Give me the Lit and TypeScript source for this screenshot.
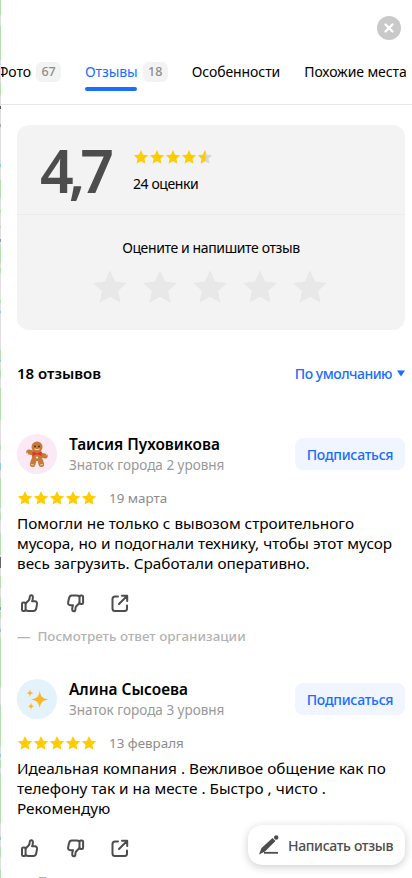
import { LitElement, css, html, svg } from 'lit'
import { customElement } from 'lit/decorators.js'

const STAR = 'M12 1.6l3.2 6.9 7.5.9-5.6 5.1 1.500 7.4L12 18.2l-6.600 3.700 1.500-7.400L1.300 9.400l7.500-.9z'

const star = (size: number, fill: string) => html`
  <svg width=${size} height=${size} viewBox="0 0 24 24"><path d=${STAR} fill=${fill} /></svg>
`

const halfStar = (size: number) => html`
  <svg width=${size} height=${size} viewBox="0 0 24 24">
    <defs>
      <clipPath id="part"><rect x="0" y="0" width="12.5" height="24" /></clipPath>
    </defs>
    <path d=${STAR} fill="#d6d6d6" />
    <path d=${STAR} fill="#fc0" clip-path="url(#part)" />
  </svg>
`

const thumbUp = html`
  <svg width="20" height="20" viewBox="0 0 20 20" fill="none" stroke="#4d4d4d" stroke-width="2" stroke-linejoin="round" stroke-linecap="round">
    <rect x="2" y="9.5" width="3.6" height="8.5" rx="1.3" />
    <path d="M5.600 10.500l3.200-3.200c.7-.9.900-1.700.9-3 0-1.300.6-2.100 1.500-2.100 1 0 1.700 1 1.700 2.200 0 1.200-.3 2.500-.8 3.900h2.800c1.500 0 2.300 1.100 2.100 2.600l-.7 4.200c-.3 1.800-1.300 2.900-3 2.900H8.500c-1.300 0-2.200-.4-2.900-1" />
  </svg>
`

const thumbDown = html`
  <svg width="20" height="20" viewBox="0 0 20 20" fill="none" stroke="#4d4d4d" stroke-width="2" stroke-linejoin="round" stroke-linecap="round">
    <rect x="14.500" y="2.500" width="3.600" height="8.500" rx="1.300" />
    <path d="M14.500 10l-3.200 3.200c-.7.9-.9 1.700-.9 3 0 1.300-.6 2.100-1.500 2.100-1 0-1.700-1-1.700-2.200 0-1.200.3-2.500.8-3.900H5.200c-1.500 0-2.300-1.100-2.100-2.600l.7-3.600c.3-1.800 1.300-3.500 3-3.500h4.800c1.300 0 2.200.4 2.900 1" />
  </svg>
`

const share = html`
  <svg width="20" height="20" viewBox="0 0 20 20" fill="none" stroke="#4d4d4d" stroke-width="2" stroke-linecap="round" stroke-linejoin="round">
    <path d="M8 3.500H5A2.500 2.500 0 0 0 2.500 6v9.500A2.500 2.500 0 0 0 5 18h9.500a2.500 2.500 0 0 0 2.500-2.500V12.500" />
    <path d="M9 11l8-8M12 2.800h5.200V8" />
  </svg>
`

const gingerbread = html`
  <svg width="24" height="27" viewBox="0 0 24 27">
    <g fill="#c67a38">
      <circle cx="12" cy="6" r="5.500" />
      <rect x="1" y="10.500" width="22" height="5" rx="2.500" transform="rotate(14 12 13)" />
      <rect x="7" y="10" width="10" height="10" rx="2" />
      <rect x="5.500" y="17" width="5.500" height="9" rx="2.700" transform="rotate(14 8 21)" />
      <rect x="13" y="17" width="5.500" height="9" rx="2.700" transform="rotate(-14 16 21)" />
    </g>
    <circle cx="10" cy="5.500" r=".9" fill="#4a2a12" />
    <circle cx="14" cy="5.500" r=".9" fill="#4a2a12" />
    <path d="M9.500 8q2.500 1.500 5 0" stroke="#fff" fill="none" stroke-width=".8" />
    <path d="M7.500 10.500l4.500 1.800 4.500-1.800v4.400L12 13.300l-4.500 1.600z" fill="#e5322d" />
    <circle cx="12" cy="16.500" r=".9" fill="#fff" />
    <path d="M2.500 11.500v3M21.500 11.500v3M6 23.500l3 .5M18 23.500l-3 .5" stroke="#f3dcc4" stroke-width=".8" />
  </svg>
`

const sparkles = html`
  <svg width="26" height="26" viewBox="0 0 24 24" fill="#fbb726">
    <path d="M14.500 4.500c.9 5.200 2.600 6.900 8 7.900-5.400 1-7.100 2.700-8 7.900-.9-5.200-2.600-6.900-8-7.900 5.400-1 7.100-2.700 8-7.900z" />
    <path d="M5.500 3c.4 2.400 1.100 3.100 3.500 3.500-2.400.4-3.100 1.100-3.500 3.500-.4-2.400-1.100-3.100-3.500-3.500 2.400-.4 3.100-1.100 3.500-3.500z" />
    <path d="M6.500 15.500c.4 2.200 1 2.800 3 3.200-2 .4-2.600 1-3 3.300-.4-2.300-1-2.900-3-3.300 2-.4 2.600-1 3-3.200z" />
  </svg>
`

const pen = svg`
  <path d="M1 20.500L3.500 14 14.500 4 17.500 7 7 17.500z" fill="#4d4d4d" />
  <circle cx="18.200" cy="3.500" r="2.200" fill="#4d4d4d" />
  <path d="M6 18.800h14" stroke="#4d4d4d" stroke-width="1.800" />
`

// the map behind the panel shows through along the left edge: [from, to, colour]
const edge: [number, number, string][] = [
  [0, 15, '#b2e0ae'], [26, 60, '#b2e0ae'], [83, 95, '#b2e0ae'], [106, 109, '#555'], [124, 127, '#aaa'],
  [164, 167, '#8ec8ea'], [180, 198, '#b2e0ae'], [210, 213, '#b2e0ae'], [226, 228, '#b2e0ae'], [239, 242, '#8aa0c8'],
  [245, 263, '#b2e0ae'], [268, 273, '#b2e0ae'], [300, 303, '#b2e0ae'], [311, 313, '#8ec8ea'], [350, 360, '#b2e0ae'],
  [360, 362, '#8ec8ea'], [370, 378, '#b2e0ae'], [388, 420, '#b2e0ae'], [445, 450, '#b2e0ae'], [463, 470, '#8ec8ea'],
  [478, 508, '#b2e0ae'], [513, 520, '#b2e0ae'], [533, 555, '#b2e0ae'], [557, 568, '#666'], [576, 588, '#b2e0ae'],
  [597, 607, '#b2e0ae'], [607, 610, '#7f9fc0'], [612, 618, '#b2e0ae'], [629, 632, '#8ec8ea'], [637, 687, '#b2e0ae'],
  [705, 747, '#b2e0ae'], [754, 757, '#8ec8ea'], [760, 768, '#b2e0ae'], [773, 823, '#b2e0ae'], [837, 840, '#8ec8ea'],
  [847, 857, '#b2e0ae'], [870, 878, '#b2e0ae'],
]

const edgeGradient = () => {
  const stops = edge.map(
    ([a, b, c]) => `#dedede ${a}px, ${c} ${a}px, ${c} ${b}px, #dedede ${b}px`
  )
  return `background: linear-gradient(180deg, ${stops.join(', ')})`
}

const reviews = [
  {
    name: 'Таисия Пуховикова',
    level: 'Знаток города 2 уровня',
    date: '19 марта',
    text: 'Помогли не только с вывозом строительного мусора, но и подогнали технику, чтобы этот мусор весь загрузить. Сработали оперативно.',
    avatar: gingerbread,
    tint: '#fbe9f5',
  },
  {
    name: 'Алина Сысоева',
    level: 'Знаток города 3 уровня',
    date: '13 февраля',
    text: 'Идеальная компания . Вежливое общение как по телефону так и на месте . Быстро , чисто . Рекомендую',
    avatar: sparkles,
    tint: '#e3f2fb',
  },
]

@customElement('app-root')
export class AppRoot extends LitElement {
  static styles = css`
    :host {
      display: block;
      width: 412px;
      height: 878px;
      overflow: hidden;
      position: relative;
      background: #fff;
      font-family: 'Noto Sans', sans-serif;
      color: #000;
    }
    .map-edge {
      position: absolute;
      left: 0;
      top: 0;
      bottom: 0;
      width: 1px;
    }
    .close {
      position: absolute;
      top: 16px;
      left: 377px;
      width: 24px;
      height: 24px;
      border-radius: 50%;
      background: #c9c9c9;
      display: flex;
      align-items: center;
      justify-content: center;
    }
    .tabs {
      margin-top: 15px;
      padding-top: 47px;
      box-sizing: border-box;
      height: 90px;
      display: flex;
      white-space: nowrap;
      border-bottom: 1px solid #e6e6e6;
      overflow: hidden;
      font-size: 14px;
      letter-spacing: -0.08px;
    }
    .tab {
      position: relative;
      height: 30px;
      display: flex;
      align-items: flex-start;
      margin-right: 24px;
      flex: none;
      line-height: 20px;
    }
    .tab.first {
      margin-left: -3px;
    }
    .tab.active {
      color: #196dff;
    }
    .tab.active::after {
      content: '';
      position: absolute;
      left: 0;
      width: 52px;
      top: 25px;
      height: 4px;
      border-radius: 2px;
      background: #196dff;
    }
    .count {
      margin-left: 5px;
      background: #f3f3f3;
      color: #8c8c8c;
      border-radius: 6px;
      font-size: 12.5px;
      font-weight: 500;
      height: 20px;
      line-height: 20px;
      width: 25px;
      text-align: center;
    }
    .content {
      padding: 20px 7px 0 17px;
    }
    .card {
      background: #f3f3f3;
      border-radius: 12px;
      height: 205px;
    }
    .score {
      height: 90px;
      box-sizing: border-box;
      padding-left: 23px;
      border-bottom: 1px solid #ebebeb;
      display: flex;
    }
    .value {
      width: 93px;
      font-size: 59px;
      font-weight: 600;
      line-height: 90px;
      color: #4d4d4d;
      letter-spacing: -5px;
      height: 90px;
    }
    .summary {
      padding-top: 24px;
      font-size: 14px;
      line-height: 20px;
      letter-spacing: -0.4px;
    }
    .mini {
      display: flex;
      margin-bottom: 8px;
      height: 17px;
    }
    .prompt {
      text-align: center;
      font-size: 14px;
      line-height: 20px;
      padding-top: 23px;
      letter-spacing: -0.38px;
    }
    .big {
      display: flex;
      justify-content: center;
      gap: 12px;
      margin-top: 10px;
      margin-left: -3px;
    }
    .list-head {
      display: flex;
      justify-content: space-between;
      align-items: center;
      margin-top: 33px;
      height: 20px;
    }
    .list-title {
      font-size: 15px;
      font-weight: 600;
    }
    .sort {
      display: flex;
      align-items: center;
      gap: 5px;
      color: #196dff;
      font-size: 14px;
      font-weight: 500;
      letter-spacing: -0.5px;
    }
    .review {
      padding-top: 51px;
    }
    .review + .review {
      padding-top: 33px;
    }
    .head {
      display: flex;
      align-items: center;
      gap: 12px;
      height: 40px;
    }
    .avatar {
      width: 40px;
      height: 40px;
      border-radius: 50%;
      display: flex;
      align-items: center;
      justify-content: center;
      flex: none;
    }
    .who {
      flex: 1;
    }
    .name {
      font-size: 15.4px;
      font-weight: 600;
      line-height: 21px;
    }
    .level {
      font-size: 13.5px;
      line-height: 20px;
      color: #999;
    }
    .follow {
      width: 110px;
      height: 32px;
      border-radius: 8px;
      background: #f0f5ff;
      color: #196dff;
      font-size: 14px;
      font-weight: 500;
      letter-spacing: -0.25px;
      display: flex;
      align-items: center;
      justify-content: center;
    }
    .rating {
      display: flex;
      align-items: center;
      height: 20px;
      margin-top: 14px;
      color: #8c8c8c;
      font-size: 13.4px;
    }
    .stars {
      display: flex;
      margin-right: 12px;
    }
    .text {
      font-size: 15.3px;
      line-height: 20px;
      margin-top: 5px;
    }
    .actions {
      display: flex;
      gap: 25px;
      margin-top: 20px;
      padding-left: 3px;
      height: 20px;
    }
    .answer {
      display: flex;
      gap: 7px;
      color: #b3b3b3;
      font-size: 13.4px;
      font-weight: 500;
      line-height: 20px;
      margin-top: 13px;
    }
    .write {
      position: absolute;
      left: 248px;
      top: 825px;
      width: 157px;
      height: 40px;
      border-radius: 14px;
      background: #fff;
      box-shadow: 0 2px 8px rgba(0, 0, 0, 0.2);
      display: flex;
      align-items: center;
      gap: 8px;
      padding-left: 10px;
      box-sizing: border-box;
      font-size: 14px;
      font-weight: 500;
      letter-spacing: -0.35px;
      color: #4d4d4d;
    }
  `

  render() {
    return html`
      <div class="tabs">
        <div class="tab first">Фото<span class="count">67</span></div>
        <div class="tab active">Отзывы<span class="count">18</span></div>
        <div class="tab">Особенности</div>
        <div class="tab">Похожие места</div>
      </div>
      <div class="content">
        <div class="card">
          <div class="score">
            <div class="value">4,7</div>
            <div class="summary">
              <div class="mini">
                ${[0, 1, 2, 3].map(() => star(16, '#fc0'))}${halfStar(16)}
              </div>
              24 оценки
            </div>
          </div>
          <div class="prompt">Оцените и напишите отзыв</div>
          <div class="big">${[0, 1, 2, 3, 4].map(() => star(38, '#e8e8e8'))}</div>
        </div>
        <div class="list-head">
          <div class="list-title">18 отзывов</div>
          <div class="sort">
            По умолчанию
            <svg width="8" height="7" viewBox="0 0 8 7"><path d="M0 .5h8L4 6.500z" fill="#196dff" /></svg>
          </div>
        </div>
        ${reviews.map(
          (r) => html`
            <div class="review">
              <div class="head">
                <div class="avatar" style="background:${r.tint}">${r.avatar}</div>
                <div class="who">
                  <div class="name">${r.name}</div>
                  <div class="level">${r.level}</div>
                </div>
                <div class="follow">Подписаться</div>
              </div>
              <div class="rating">
                <div class="stars">${[0, 1, 2, 3, 4].map(() => star(16, '#fc0'))}</div>
                ${r.date}
              </div>
              <div class="text">${r.text}</div>
              <div class="actions">${thumbUp}${thumbDown}${share}</div>
              <div class="answer"><span>—</span><span>Посмотреть ответ организации</span></div>
            </div>
          `
        )}
      </div>
      <div class="close">
        <svg width="12" height="12" viewBox="0 0 12 12">
          <path d="M2.500 2.500l7 7M9.500 2.500l-7 7" stroke="#fff" stroke-width="2.400" stroke-linecap="round" />
        </svg>
      </div>
      <div class="write">
        <svg width="22" height="22" viewBox="0 0 22 22" fill="none">${pen}</svg>
        Написать отзыв
      </div>
      <div class="map-edge" style=${edgeGradient()}></div>
    `
  }
}
